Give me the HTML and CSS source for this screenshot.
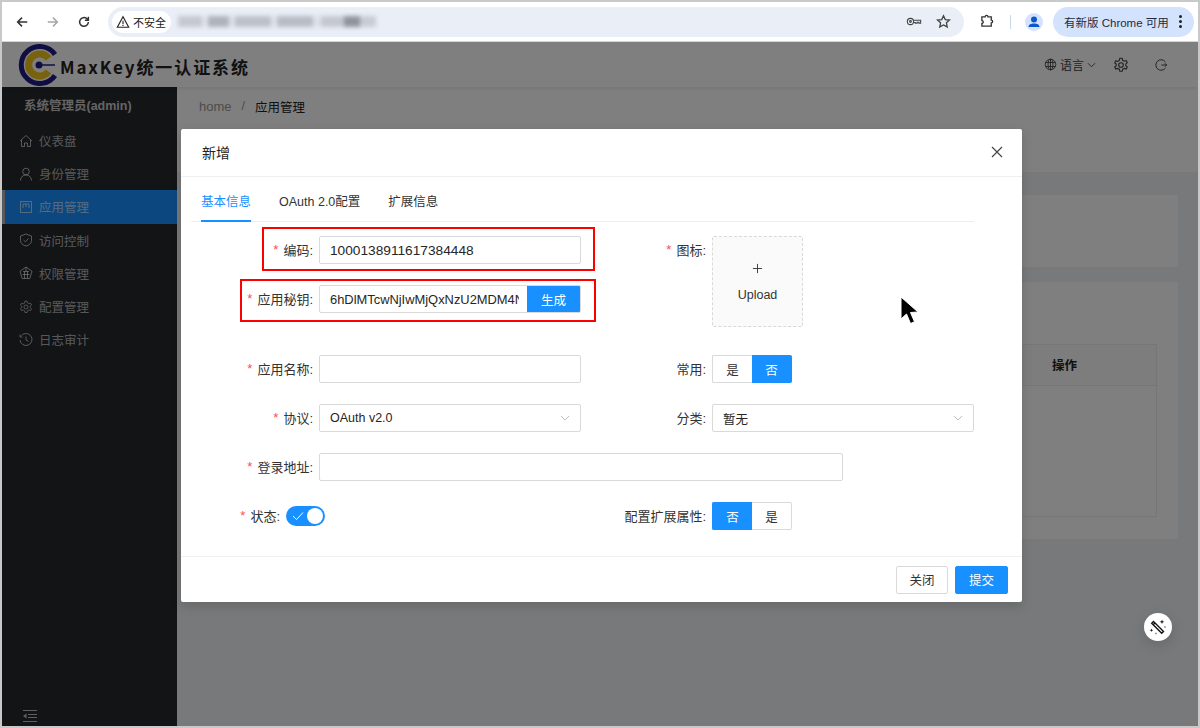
FILE: index.html
```html
<!DOCTYPE html>
<html lang="zh-CN">
<head>
    <meta charset="UTF-8">
    <title>MaxKey统一认证系统</title>
    <link rel="stylesheet" href="styles.css">
</head>
<body>
    <div class="window">
        <div class="toolbar">
            <svg class="tool-icon" viewBox="0 0 16 16"><path d="M14 8H3M8 3 3 8l5 5"/></svg>
            <svg class="tool-icon dim" viewBox="0 0 16 16"><path d="M2 8h11M8 3l5 5-5 5"/></svg>
            <svg class="tool-icon" viewBox="0 0 16 16"><path d="M13 8a5 5 0 1 1-1.6-3.7L13 6M13 2v4H9"/></svg>
            <div class="omnibox">
                <div class="chip">
                    <svg class="warn" viewBox="0 0 16 16"><path d="M8 2 1.5 14h13zM8 6.5v4M8 11.500v1.200"/></svg>
                    <span>不安全</span>
                </div>
                <div class="url-blur"></div>
                <svg class="omni-icon key" viewBox="0 0 18 12"><circle cx="5" cy="6" r="3.5"/><circle cx="5" cy="6" r="1"/><path d="M8.5 4.500H16.500V8h-2V6.800h-2V8h-2V7.200H8.500"/></svg>
                <svg class="omni-icon star" viewBox="0 0 16 16"><path d="m8 1.800 1.900 4.100 4.500.5-3.300 3 .9 4.400L8 11.600l-4 2.200.9-4.400-3.300-3 4.500-.5z"/></svg>
            </div>
            <svg class="ext-icon" viewBox="0 0 16 16"><path d="M2 3h3.500a1.500 1.500 0 0 1 3 0H12v3.500a1.500 1.500 0 0 1 0 3V13H2V10a1.500 1.500 0 0 0 0-3z"/></svg>
            <div class="tool-divider"></div>
            <div class="avatar">
                <svg viewBox="0 0 18 18"><circle cx="9" cy="6.500" r="3"/><path d="M3.500 14c0-2.500 2.500-3.500 5.500-3.500s5.500 1 5.500 3.500z"/></svg>
            </div>
            <div class="update-pill">
                <span>有新版 Chrome 可用</span>
                <span class="pill-dots"><i></i><i></i><i></i></span>
            </div>
        </div>

        <div class="app">
            <header class="app-header">
                <svg class="logo" viewBox="0 0 42 42">
                    <path class="logo-ring" d="M37 10.500A18.500 18.500 0 1 0 37 31.500"/>
                    <path class="logo-gold" d="M30.500 14.500A11 11 0 1 0 30.500 27.500"/>
                    <circle class="logo-dot" cx="21" cy="21" r="3.500"/>
                    <path class="logo-bar" d="M21 21h16"/>
                </svg>
                <div class="brand">MaxKey统一认证系统</div>
                <div class="header-tools">
                    <div class="lang">
                        <svg class="head-icon small" viewBox="0 0 16 16"><circle cx="8" cy="8" r="6.500"/><ellipse cx="8" cy="8" rx="3" ry="6.500"/><path d="M2 5.500h12M2 10.500h12M8 1.500v13"/></svg>
                        <span>语言</span>
                        <svg class="lang-caret" viewBox="0 0 10 6"><path d="m1 1 4 4 4-4"/></svg>
                    </div>
                    <svg class="head-icon gear" viewBox="0 0 16 16"><circle cx="8" cy="8" r="2.300"/><path d="M6.800 1.300h2.400l.4 2 1.600.9 1.900-.7 1.200 2.100-1.500 1.300v1.800l1.500 1.300-1.200 2.100-1.900-.7-1.600.9-.4 2H6.800l-.4-2-1.600-.9-1.900.7-1.200-2.100 1.500-1.300V7.100L1.700 5.800l1.200-2.100 1.900.7 1.600-.9z"/></svg>
                    <svg class="head-icon logout" viewBox="0 0 16 16"><path d="M13 4.500A6 6 0 1 0 13 11.500M8.500 8H14.500M12.500 6l2 2-2 2"/></svg>
                </div>
            </header>

            <div class="app-body">
                <aside class="sidebar">
                    <div class="user-name">系统管理员(admin)</div>
                    <nav class="menu">
                        <div class="menu-item">
                            <svg class="menu-icon" viewBox="0 0 14 14"><path d="M1 7 7 1.500 13 7M2.500 6v6.500h3V9h3v3.500h3V6"/></svg>
                            <span>仪表盘</span>
                        </div>
                        <div class="menu-item">
                            <svg class="menu-icon" viewBox="0 0 14 14"><circle cx="7" cy="4.500" r="3.300"/><path d="M1.500 13.500c0-3 2.200-5.500 5.500-5.500s5.500 2.500 5.500 5.500"/></svg>
                            <span>身份管理</span>
                        </div>
                        <div class="menu-item active">
                            <svg class="menu-icon" viewBox="0 0 14 14"><path d="M1.500 1.500h11v11h-11zM4 4h6M4 4v4M10 4v4M7 4v3"/></svg>
                            <span>应用管理</span>
                        </div>
                        <div class="menu-item">
                            <svg class="menu-icon" viewBox="0 0 14 14"><path d="M7 1 12.500 3v4.500c0 3-2.500 4.800-5.500 5.500-3-.7-5.500-2.500-5.500-5.500V3zM4.500 7l2 1.800 3-3.300"/></svg>
                            <span>访问控制</span>
                        </div>
                        <div class="menu-item">
                            <svg class="menu-icon" viewBox="0 0 14 14"><path d="M7 1 13 5.300 10.800 12.500H3.200L1 5.300zM4 5.500h6M3.500 8.500h7M5.500 5.500v7M8.500 5.500v7M7 1v4.500"/></svg>
                            <span>权限管理</span>
                        </div>
                        <div class="menu-item">
                            <svg class="menu-icon" viewBox="0 0 16 16"><circle cx="8" cy="8" r="2.300"/><path d="M6.800 1.300h2.400l.4 2 1.600.9 1.900-.7 1.200 2.100-1.500 1.300v1.800l1.500 1.300-1.200 2.100-1.900-.7-1.600.9-.4 2H6.800l-.4-2-1.600-.9-1.900.7-1.200-2.100 1.500-1.300V7.100L1.700 5.800l1.200-2.100 1.900.7 1.600-.9z"/></svg>
                            <span>配置管理</span>
                        </div>
                        <div class="menu-item">
                            <svg class="menu-icon" viewBox="0 0 14 14"><path d="M2.500 2.500A6 6 0 1 1 1 7M7 3.500V7l2.500 1.500M1 1.500v2.500h2.500"/></svg>
                            <span>日志审计</span>
                        </div>
                    </nav>
                    <svg class="collapse-icon" viewBox="0 0 14 12"><path d="M0 .5h14M5 4.500h9M5 7.500h9M0 11.500h14"/><path class="collapse-tip" d="M3.500 3.500v5L0 6z"/></svg>
                </aside>

                <main class="content">
                    <div class="page-head">
                        <div class="crumbs"><span class="crumb-home">home</span><span class="crumb-sep">/</span><span>应用管理</span></div>
                    </div>
                    <div class="card search-card"></div>
                    <div class="card table-card">
                        <div class="table-box">
                            <div class="table-head"><span class="op-title">操作</span></div>
                        </div>
                    </div>
                </main>
            </div>

            <div class="mask"></div>
            <button class="magic-btn">
                <svg viewBox="0 0 20 20"><path class="wand" d="m5.500 4.500 10 10-1.800 1.800-10-10zM7 6l-1.800 1.800"/><path class="spark" d="M14 2.500l.6 1.700 1.700.6-1.700.6-.6 1.700-.6-1.700-1.700-.6 1.700-.6zM3.500 11.500l.5 1.300 1.300.5-1.300.5-.5 1.300-.5-1.300-1.300-.5 1.300-.5zM17 9l.6 1-.6 1-.6-1zM8 15.500l.6 1-.6 1-.6-1z"/></svg>
            </button>

            <section class="modal">
                <div class="modal-title">
                    <span>新增</span>
                    <svg class="modal-close" viewBox="0 0 12 12"><path d="m1 1 10 10M11 1 1 11"/></svg>
                </div>
                <div class="modal-body">
                    <div class="tabs">
                        <div class="tab current">基本信息</div>
                        <div class="tab">OAuth 2.0配置</div>
                        <div class="tab">扩展信息</div>
                    </div>

                    <div class="form-grid">
                        <label class="field-label"><em>*</em>编码:</label>
                        <div class="input">1000138911617384448</div>
                        <label class="field-label"><em>*</em>图标:</label>
                        <div class="upload">
                            <svg class="upload-plus" viewBox="0 0 12 12"><path d="M6 1v10M1 6h10"/></svg>
                            <span>Upload</span>
                        </div>

                        <label class="field-label row-start"><em>*</em>应用秘钥:</label>
                        <div class="input with-btn">
                            <span class="secret">6hDlMTcwNjIwMjQxNzU2MDM4N</span>
                            <span class="gen-btn">生成</span>
                        </div>

                        <label class="field-label row-start"><em>*</em>应用名称:</label>
                        <div class="input"></div>
                        <label class="field-label">常用:</label>
                        <div class="segment">
                            <span class="seg">是</span>
                            <span class="seg on">否</span>
                        </div>

                        <label class="field-label row-start"><em>*</em>协议:</label>
                        <div class="input select">
                            <span>OAuth v2.0</span>
                            <svg class="caret" viewBox="0 0 10 6"><path d="m1 1 4 4 4-4"/></svg>
                        </div>
                        <label class="field-label">分类:</label>
                        <div class="input select">
                            <span>暂无</span>
                            <svg class="caret" viewBox="0 0 10 6"><path d="m1 1 4 4 4-4"/></svg>
                        </div>

                        <label class="field-label row-start"><em>*</em>登录地址:</label>
                        <div class="input wide"></div>

                        <div class="status-cell">
                            <label class="field-label status-label"><em>*</em>状态:</label>
                            <div class="switch">
                                <svg class="switch-check" viewBox="0 0 12 10"><path d="m1 5 3.500 3.500L11 1.500"/></svg>
                                <i class="knob"></i>
                            </div>
                        </div>
                        <label class="field-label">配置扩展属性:</label>
                        <div class="segment">
                            <span class="seg on">否</span>
                            <span class="seg">是</span>
                        </div>
                    </div>
                </div>
                <div class="modal-foot">
                    <button class="btn close">关闭</button>
                    <button class="btn primary">提交</button>
                </div>
                <div class="mark mark-code"></div>
                <div class="mark mark-secret"></div>
            </section>

            <svg class="cursor" viewBox="0 0 20 30"><path d="M2 1v22l5.500-5 4 9.500 4-1.700-4-9.300 7.500-.5z"/></svg>
        </div>
    </div>
</body>
</html>
```

FILE: styles.css
```css
* {
    box-sizing: border-box;
}

html, body {
    margin: 0;
    height: 100%;
}

body {
    background: #c9c9c9;
    padding: 2px;
    font-family: "Liberation Sans", "Noto Sans CJK SC", sans-serif;
    font-size: 12.5px;
    color: #333;
    overflow: hidden;
}

.window {
    height: 724px;
    display: flex;
    flex-direction: column;
}

/* browser bar */
.toolbar {
    height: 40px;
    flex: none;
    background: #fff;
    display: flex;
    align-items: center;
    padding-left: 13px;
    border-bottom: 1px solid #d5d5d5;
}

.tool-icon {
    width: 14px;
    height: 14px;
    margin-right: 17px;
    fill: none;
    stroke: #333;
    stroke-width: 1.7;
}

.tool-icon.dim {
    stroke: #a6a6a6;
}

.omnibox {
    width: 856px;
    height: 30px;
    background: #e9eef7;
    border-radius: 15px;
    display: flex;
    align-items: center;
    padding: 0 13px 0 4px;
}

.chip {
    width: 59px;
    height: 22px;
    background: #fff;
    border-radius: 11px;
    display: flex;
    align-items: center;
    gap: 3px;
    padding-left: 4px;
    font-size: 11px;
    color: #222;
}

.warn {
    width: 14px;
    height: 14px;
    fill: none;
    stroke: #222;
    stroke-width: 1.3;
}

.url-blur {
    width: 198px;
    height: 11px;
    margin-left: 7px;
    filter: blur(2px);
    background: linear-gradient(90deg, #c5c8ce 0 12%, #dfe3ea 12% 15%, #aeb2b9 15% 26%, #dde1e8 26% 29%, #bcc0c7 29% 47%, #e0e4eb 47% 50%, #b8bcc3 50% 68%, #dde1e8 68% 72%, #c4c8ce 72% 84%, #8f949c 84% 92%, #c8ccd3 92% 100%);
}

.omni-icon {
    fill: none;
    stroke: #444;
    stroke-width: 1.2;
}

.key {
    width: 16px;
    height: 11px;
    margin-left: auto;
}

.star {
    width: 15px;
    height: 15px;
    margin-left: 14px;
    stroke-width: 1.4;
}

.ext-icon {
    width: 15px;
    height: 15px;
    margin-left: 16px;
    fill: none;
    stroke: #333;
    stroke-width: 1.4;
}

.tool-divider {
    width: 1px;
    height: 14px;
    background: #c9d7ee;
    margin-left: 15px;
}

.avatar {
    width: 18px;
    height: 18px;
    border-radius: 50%;
    background: #d3e3fd;
    margin-left: 14px;
}

.avatar svg {
    display: block;
    fill: #0b57d0;
}

.update-pill {
    width: 141px;
    height: 30px;
    margin-left: 10px;
    background: #d3e3fd;
    border-radius: 15px;
    display: flex;
    align-items: center;
    padding-left: 11px;
    font-size: 11.5px;
    color: #1f2a3d;
    white-space: nowrap;
}

.pill-dots {
    display: flex;
    flex-direction: column;
    gap: 2px;
    margin-left: 10px;
}

.pill-dots i {
    width: 3px;
    height: 3px;
    border-radius: 50%;
    background: #222;
}

/* app behind the dialog */
.app {
    flex: 1;
    position: relative;
    display: flex;
    flex-direction: column;
    overflow: hidden;
}

.app-header {
    height: 45px;
    flex: none;
    background: #fff;
    display: flex;
    align-items: center;
    padding-left: 16px;
    box-shadow: 0 1px 4px rgba(0, 0, 0, 0.1);
    position: relative;
}

.logo {
    width: 42px;
    height: 42px;
    fill: none;
}

.logo-ring {
    stroke: #211b84;
    stroke-width: 5;
}

.logo-gold {
    stroke: #f2c51d;
    stroke-width: 7;
}

.logo-dot {
    fill: #211b84;
}

.logo-bar {
    stroke: #211b84;
    stroke-width: 1.5;
}

.brand {
    font-family: "Noto Sans CJK SC", sans-serif;
    font-size: 17px;
    font-weight: 700;
    letter-spacing: 1.9px;
    color: #222;
    margin-top: 4px;
}

.header-tools {
    margin-left: auto;
    display: flex;
    align-items: center;
    padding-right: 30px;
    color: #444;
}

.lang {
    display: flex;
    align-items: center;
    gap: 3px;
    margin-right: 17px;
    font-size: 12px;
}

.lang-caret {
    width: 9px;
    height: 6px;
    fill: none;
    stroke: #444;
}

.head-icon {
    width: 16px;
    height: 16px;
    fill: none;
    stroke: #444;
    stroke-width: 1.1;
}

.head-icon.small {
    width: 13px;
    height: 13px;
}

.head-icon.gear {
    margin-right: 25px;
}

.head-icon.logout {
    width: 14px;
    height: 14px;
}

.app-body {
    flex: 1;
    display: flex;
    min-height: 0;
}

.sidebar {
    width: 175px;
    flex: none;
    background: #26282c;
    color: rgba(255, 255, 255, 0.65);
    display: flex;
    flex-direction: column;
}

.user-name {
    font-weight: 700;
    padding: 8px 0 0 22px;
    height: 37px;
    color: rgba(255, 255, 255, 0.75);
}

.menu-item {
    height: 33.2px;
    display: flex;
    align-items: center;
    gap: 6px;
    padding-left: 17px;
}

.menu-item.active {
    background: #1890ff;
    border-left: 3px solid #b5b5b5;
    padding-left: 14px;
}

.menu-icon {
    width: 14px;
    height: 14px;
    fill: none;
    stroke: rgba(255, 255, 255, 0.65);
    stroke-width: 1;
}

.collapse-icon {
    width: 14px;
    height: 12px;
    margin: auto 0 4px 21px;
    fill: none;
    stroke: rgba(255, 255, 255, 0.7);
}

.collapse-tip {
    fill: rgba(255, 255, 255, 0.7);
    stroke: none;
}

.content {
    flex: 1;
    background: #f0f2f5;
    display: flex;
    flex-direction: column;
}

.page-head {
    height: 85px;
    flex: none;
    background: #fff;
    padding: 10px 22px;
}

.crumbs {
    display: flex;
    align-items: center;
    height: 18px;
    gap: 10px;
    color: #222;
}

.crumb-home {
    color: #999;
    font-size: 13px;
}

.crumb-sep {
    color: #999;
}

.card {
    background: #fff;
    margin: 0 20px;
}

.search-card {
    height: 72px;
    margin-top: 23px;
}

.table-card {
    height: 257px;
    margin-top: 15px;
    padding: 62px 21px 21px;
}

.table-box {
    height: 173px;
    border: 1px solid #eee;
}

.table-head {
    height: 41px;
    background: #fafafa;
    border-bottom: 1px solid #eee;
    display: flex;
    justify-content: flex-end;
    align-items: center;
    padding-right: 79px;
    padding-bottom: 2px;
    font-weight: 700;
    color: #222;
}

.mask {
    position: absolute;
    inset: 0;
    background: rgba(0, 0, 0, 0.5);
}

.magic-btn {
    position: absolute;
    left: 1142px;
    top: 571px;
    width: 28px;
    height: 28px;
    padding: 4px;
    border: none;
    border-radius: 50%;
    background: #fff;
    box-shadow: 0 4px 14px rgba(0, 0, 0, 0.15);
}

.magic-btn svg {
    display: block;
    width: 20px;
    height: 20px;
}

.wand {
    fill: none;
    stroke: #111;
    stroke-width: 1.4;
}

.spark {
    fill: #111;
}

/* dialog */
.modal {
    position: absolute;
    left: 179px;
    top: 87px;
    width: 841px;
    height: 473px;
    background: #fff;
    border-radius: 2px;
    box-shadow: 0 4px 12px rgba(0, 0, 0, 0.15);
    display: flex;
    flex-direction: column;
}

.modal-title {
    height: 48px;
    flex: none;
    border-bottom: 1px solid #f0f0f0;
    display: flex;
    align-items: center;
    justify-content: space-between;
    padding: 0 19px 2px 21px;
    font-size: 14px;
    color: #222;
}

.modal-close {
    width: 12px;
    height: 12px;
    fill: none;
    stroke: #444;
    stroke-width: 1.2;
}

.modal-body {
    flex: 1;
}

.tabs {
    height: 45px;
    margin: 0 48px 0 10px;
    padding-left: 10px;
    display: flex;
    gap: 28px;
    border-bottom: 1px solid #eee;
}

.tab {
    line-height: 50px;
    height: 45px;
    color: #333;
    white-space: nowrap;
}

.tab.current {
    color: #1890ff;
    border-bottom: 2px solid #1890ff;
}

.form-grid {
    display: grid;
    grid-template-columns: 133px 262px 121px 262px;
    grid-template-rows: 28px 49px 28px 28px 28px 28px;
    column-gap: 5px;
    row-gap: 21px;
    margin-top: 14px;
}

.field-label {
    display: flex;
    align-items: center;
    justify-content: flex-end;
    color: #333;
    font-size: 13px;
    white-space: nowrap;
    height: 28px;
    padding: 0 1px 2px 0;
}

.field-label.row-start {
    grid-column: 1;
}

.field-label em {
    color: #ff4d4f;
    font-style: normal;
    margin-right: 5px;
}

.input {
    height: 28px;
    border: 1px solid #d9d9d9;
    border-radius: 2px;
    background: #fff;
    display: flex;
    align-items: center;
    padding: 0 10px;
    font-size: 13.7px;
    color: #262626;
    overflow: hidden;
    white-space: nowrap;
}

.input.with-btn {
    padding: 0 0 0 10px;
}

.secret {
    width: 189px;
    flex: none;
    overflow: hidden;
    font-size: 12.9px;
}

.gen-btn {
    margin-left: auto;
    width: 53px;
    height: 26px;
    background: #1890ff;
    color: #fff;
    font-size: 12.5px;
    display: flex;
    align-items: center;
    justify-content: center;
}

.input.select {
    justify-content: space-between;
    font-size: 12.5px;
}

.caret {
    width: 10px;
    height: 6px;
    fill: none;
    stroke: #bfbfbf;
}

.input.wide {
    grid-column: 2 / 5;
    width: 524px;
}

.upload {
    grid-row: 1 / span 2;
    grid-column: 4;
    width: 91px;
    height: 91px;
    padding-top: 2px;
    background: #fafafa;
    border: 1px dashed #d9d9d9;
    border-radius: 2px;
    display: flex;
    flex-direction: column;
    align-items: center;
    justify-content: center;
    gap: 14px;
    color: #333;
}

.upload-plus {
    width: 11px;
    height: 11px;
    fill: none;
    stroke: #333;
}

.segment {
    display: flex;
    width: 80px;
    height: 28px;
}

.seg {
    flex: 1;
    display: flex;
    align-items: center;
    justify-content: center;
    border: 1px solid #d9d9d9;
    color: #333;
}

.seg:first-child {
    border-radius: 2px 0 0 2px;
    border-right: none;
}

.seg:last-child {
    border-radius: 0 2px 2px 0;
    border-left: none;
}

.seg.on {
    background: #1890ff;
    border-color: #1890ff;
    color: #fff;
}

.status-cell {
    grid-column: 1 / span 2;
    display: flex;
    align-items: center;
    gap: 5px;
}

.status-label {
    width: 100px;
}

.switch {
    width: 39px;
    height: 20px;
    background: #1890ff;
    border-radius: 10px;
    display: flex;
    align-items: center;
    justify-content: space-between;
    padding: 0 2px 0 6px;
}

.switch-check {
    width: 12px;
    height: 10px;
    fill: none;
    stroke: #fff;
}

.knob {
    width: 16px;
    height: 16px;
    background: #fff;
    border-radius: 50%;
}

.modal-foot {
    height: 46px;
    flex: none;
    border-top: 1px solid #f0f0f0;
    display: flex;
    justify-content: flex-end;
    align-items: center;
    gap: 7px;
    padding-right: 14px;
}

.btn {
    width: 53px;
    height: 28px;
    padding: 0;
    border: 1px solid #d9d9d9;
    border-radius: 2px;
    background: #fff;
    color: #333;
    font: inherit;
}

.btn.close {
    width: 52px;
}

.btn.primary {
    background: #1890ff;
    border-color: #1890ff;
    color: #fff;
}

.mark {
    position: absolute;
    border: 2px solid #f00;
}

.mark-code {
    left: 81px;
    top: 98px;
    width: 333px;
    height: 44px;
}

.mark-secret {
    left: 59px;
    top: 150px;
    width: 356px;
    height: 43px;
}

.cursor {
    position: absolute;
    left: 897px;
    top: 254px;
    width: 20px;
    height: 30px;
    fill: #000;
    stroke: #fff;
    stroke-width: 1;
}
```
